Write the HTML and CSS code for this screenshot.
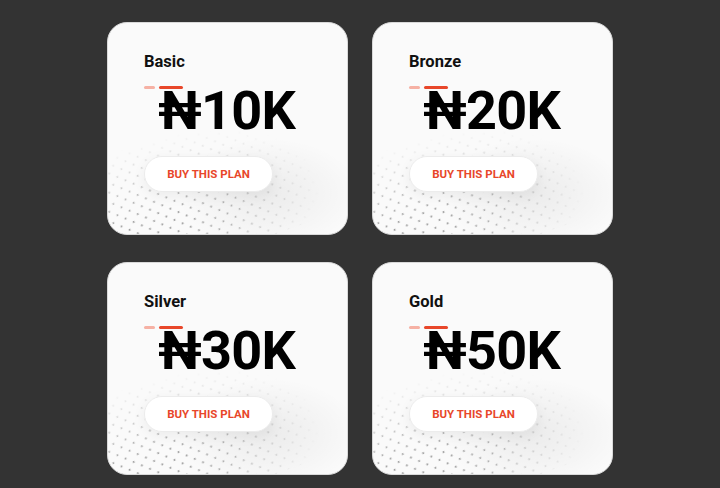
FILE: index.html
```html
<!DOCTYPE html>
<html>
<head>
<meta charset="utf-8">
<link rel="stylesheet" href="styles.css">
</head>
<body>
<div class="grid">
  <div class="card">
    <div class="dots"></div>
    <div class="glow"></div>
    <h2 class="title">Basic</h2>
    <div class="bars"><span class="bar-a"></span><span class="bar-b"></span></div>
    <div class="price">₦10K</div>
    <button class="buy">BUY THIS PLAN</button>
  </div>
  <div class="card">
    <div class="dots"></div>
    <div class="glow"></div>
    <h2 class="title">Bronze</h2>
    <div class="bars"><span class="bar-a"></span><span class="bar-b"></span></div>
    <div class="price">₦20K</div>
    <button class="buy">BUY THIS PLAN</button>
  </div>
  <div class="card">
    <div class="dots"></div>
    <div class="glow"></div>
    <h2 class="title">Silver</h2>
    <div class="bars"><span class="bar-a"></span><span class="bar-b"></span></div>
    <div class="price">₦30K</div>
    <button class="buy">BUY THIS PLAN</button>
  </div>
  <div class="card">
    <div class="dots"></div>
    <div class="glow"></div>
    <h2 class="title">Gold</h2>
    <div class="bars"><span class="bar-a"></span><span class="bar-b"></span></div>
    <div class="price">₦50K</div>
    <button class="buy">BUY THIS PLAN</button>
  </div>
</div>
</body>
</html>
```
FILE: styles.css
```css
html, body {
  margin: 0;
  padding: 0;
  background: #333333;
  font-family: Roboto, "Liberation Sans", sans-serif;
}
.grid {
  display: grid;
  grid-template-columns: 241px 241px;
  grid-template-rows: 213px 213px;
  column-gap: 24px;
  row-gap: 27px;
  justify-content: center;
  padding-top: 22px;
}
.card {
  position: relative;
  overflow: hidden;
  box-sizing: border-box;
  background: #fafafa;
  border: 1px solid #d9d9d9;
  border-radius: 20px;
  padding: 29px 0 0 36px;
  display: flex;
  flex-direction: column;
  align-items: flex-start;
}
.dots {
  position: absolute;
  left: -30px;
  bottom: -20px;
  width: 260px;
  height: 150px;
  background-image:
    radial-gradient(circle, #9c9c9c 0.7px, transparent 1.3px),
    radial-gradient(circle, #9c9c9c 0.7px, transparent 1.3px);
  background-size: 13px 12px, 13px 12px;
  background-position: 0 0, 6.5px 6px;
  transform: rotate(-20deg);
  -webkit-mask-image: radial-gradient(ellipse 170px 90px at 25% 72%, #000 20%, transparent 100%);
  mask-image: radial-gradient(ellipse 170px 90px at 25% 72%, #000 20%, transparent 100%);
}
.glow {
  position: absolute;
  left: 60px;
  top: 110px;
  width: 200px;
  height: 120px;
  background: radial-gradient(ellipse at center, rgba(0,0,0,0.06), rgba(0,0,0,0) 65%);
}
.title {
  position: relative;
  margin: 0;
  font-size: 16.5px;
  line-height: 20px;
  font-weight: 700;
  color: #111;
}
.bars {
  position: relative;
  display: flex;
  gap: 4px;
  margin-top: 14px;
  z-index: 0;
}
.bar-a, .bar-b {
  display: block;
  height: 3px;
  border-radius: 2px;
}
.bar-a { width: 11px; background: #f6b1a4; }
.bar-b { width: 24px; background: #e8472a; }
.price {
  position: relative;
  margin: -6px 0 0 14px;
  font-size: 54px;
  line-height: 56px;
  font-weight: 700;
  color: #000;
  letter-spacing: -0.8px;
}
.buy {
  position: relative;
  margin-top: 17px;
  width: 129px;
  height: 36px;
  border: 1px solid #ececec;
  border-radius: 18px;
  background: #fff;
  box-shadow: 0 4px 14px rgba(0,0,0,0.06);
  color: #e8472a;
  font-family: Roboto, "Liberation Sans", sans-serif;
  font-size: 11.5px;
  font-weight: 700;
  padding: 0;
}
```
